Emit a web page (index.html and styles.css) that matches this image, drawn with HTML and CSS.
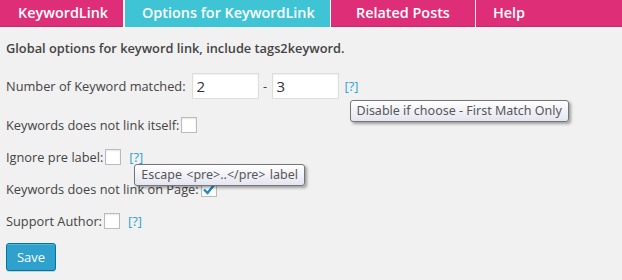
FILE: index.html
```html
<!DOCTYPE html>
<html>
<head>
  <meta charset="UTF-8">
  <title>Options for KeywordLink</title>
  <link rel="stylesheet" href="styles.css">
</head>
<body>

<div class="tabs">
  <a class="tab tab--first" href="#">KeywordLink</a>
  <a class="tab tab--active" href="#">Options for KeywordLink</a>
  <a class="tab tab--related" href="#">Related Posts</a>
  <a class="tab tab--help" href="#">Help</a>
</div>

<div class="options">
  <p class="intro">Global options for keyword link, include tags2keyword.</p>

  <div class="row row--inputs">
    <label>Number of Keyword matched:</label>
    <input class="text-input" type="text" value="2">
    <span class="dash">-</span>
    <input class="text-input" type="text" value="3">
    <span class="help-wrap">
      <a class="help" href="#">[?]</a>
      <span class="tip tip--match">Disable if choose - First Match Only</span>
    </span>
  </div>

  <div class="row">
    <label>Keywords does not link itself:</label>
    <span class="check"></span>
  </div>

  <div class="row">
    <label>Ignore pre label:</label>
    <span class="check"></span>
    <span class="help-wrap">
      <a class="help" href="#">[?]</a>
      <span class="tip tip--pre">Escape &lt;pre&gt;..&lt;/pre&gt; label</span>
    </span>
  </div>

  <div class="row">
    <label>Keywords does not link on Page:</label>
    <span class="check check--on">
      <svg width="14" height="12" viewBox="0 0 14 12"><path d="M2 6.5 L5.5 10 L12.5 1.5" fill="none" stroke="#1e8cbe" stroke-width="2.4"/></svg>
    </span>
  </div>

  <div class="row">
    <label>Support Author:</label>
    <span class="check"></span>
    <a class="help" href="#">[?]</a>
  </div>

  <button class="button-save">Save</button>
</div>

</body>
</html>
```

FILE: styles.css
```css
html, body {
  margin: 0;
  padding: 0;
}
*, *:before, *:after {
  box-sizing: border-box;
}
body {
  background-color: #f1f1f1;
  color: #444444;
  font-family: "Open Sans", sans-serif;
  font-size: 12.8px;
  width: 622px;
  height: 280px;
  overflow: hidden;
}
.tabs {
  display: flex;
  height: 27px;
}
.tab {
  background-color: #de2e78;
  border-bottom: 1px solid #b8306e;
  color: #ffffff;
  font-size: 14.4px;
  font-weight: 600;
  line-height: 26px;
  text-decoration: none;
  padding-left: 18px;
}
.tab--first {
  width: 123px;
  margin-right: 2px;
}
.tab--active {
  background-color: #3ec4d5;
  border-bottom-color: #3ec4d5;
  width: 205px;
  margin-right: 1px;
  padding-left: 17px;
}
.tab--related {
  width: 144px;
  margin-right: 1px;
  padding-left: 25px;
}
.tab--help {
  flex: 1;
  padding-left: 17px;
}
.options {
  padding: 0 6px;
}
.intro {
  margin: 11px 0 15px;
  font-weight: 600;
  line-height: 20px;
}
.row {
  display: flex;
  align-items: center;
  height: 20px;
  margin-bottom: 12px;
}
.row--inputs {
  height: 26px;
  margin-bottom: 16px;
}
.row label {
  margin-right: 2px;
  white-space: nowrap;
}
.row--inputs label {
  margin-right: 6px;
}
.text-input {
  width: 67px;
  height: 26px;
  border: 1px solid #dddddd;
  background: #ffffff;
  box-shadow: inset 0 1px 2px rgba(0, 0, 0, .07);
  color: #333333;
  font-family: "Open Sans", sans-serif;
  font-size: 15px;
  padding: 0 4px;
  margin: 0;
}
.dash {
  width: 13px;
  text-align: center;
}
.help-wrap {
  position: relative;
  display: inline-flex;
}
.help {
  color: #2ea2cc;
  text-decoration: none;
  margin-left: 6px;
}
.check + .help,
.check + .help-wrap .help {
  margin-left: 8px;
}
.check {
  display: inline-flex;
  align-items: center;
  justify-content: center;
  width: 16px;
  height: 16px;
  border: 1px solid #bbbbbb;
  background: #ffffff;
  box-shadow: inset 0 1px 2px rgba(0, 0, 0, .1);
}
.tip {
  position: absolute;
  z-index: 2;
  white-space: nowrap;
  height: 22px;
  line-height: 20px;
  padding: 0 6px;
  border: 1px solid #767676;
  border-radius: 3px;
  background: linear-gradient(#ffffff, #e4e5f0);
  box-shadow: 2px 2px 3px rgba(0, 0, 0, .35);
  color: #575757;
  font-family: "Noto Sans", sans-serif;
  font-size: 12.5px;
}
.tip--match {
  left: 11px;
  top: 23px;
}
.tip--pre {
  left: 13px;
  top: 16px;
  padding: 0 6px;
  word-spacing: 1px;
}
.button-save {
  display: block;
  width: 50px;
  height: 28px;
  margin-top: 11px;
  padding: 0;
  background: #2ea2cc;
  border: 1px solid #0074a2;
  border-radius: 3px;
  box-shadow: inset 0 1px 0 rgba(120, 200, 230, .5), 0 1px 0 rgba(0, 0, 0, .15);
  color: #ffffff;
  font-family: "Open Sans", sans-serif;
  font-size: 13px;
}
```
